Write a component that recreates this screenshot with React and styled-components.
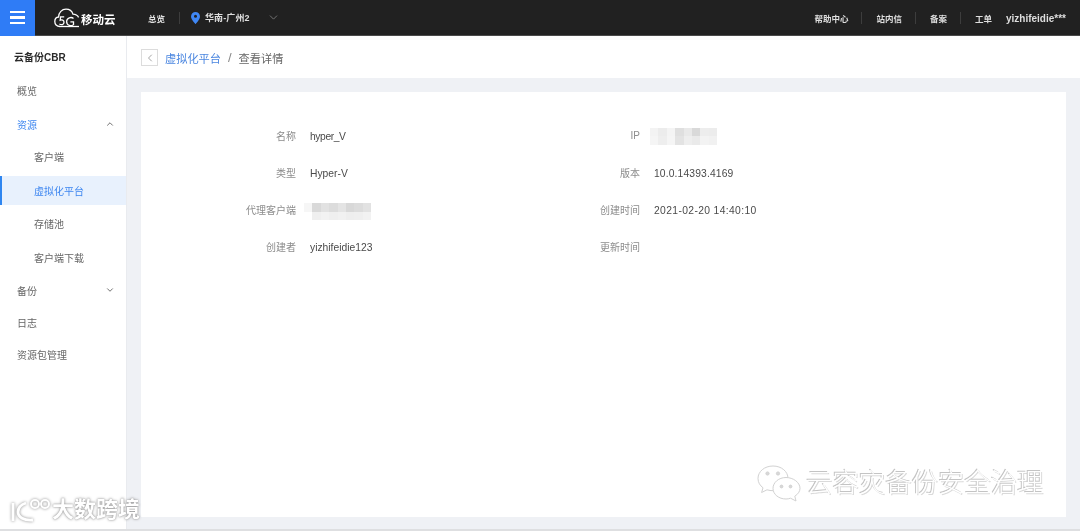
import React from 'react';
import styled, { createGlobalStyle } from 'styled-components';
import { ChevronDown, ChevronLeft, ChevronUp } from 'lucide-react';

const FONT = `"Liberation Sans", "Noto Sans CJK SC", sans-serif`;

const GlobalStyle = createGlobalStyle`
  html, body {
    margin: 0;
    padding: 0;
    background: #fff;
    font-family: ${FONT};
  }
`;

const Page = styled.div`
  position: relative;
  display: flex;
  flex-direction: column;
  width: 1080px;
  height: 531px;
  overflow: hidden;
  border-bottom: 2px solid #dedfe1;
  box-sizing: border-box;
  filter: blur(0.45px);
`;

/* top bar */
const TopBar = styled.header`
  display: flex;
  align-items: center;
  flex: none;
  height: 36px;
  box-sizing: border-box;
  background: #212121;
  border-bottom: 1px solid #4a4a4a;
  color: #dedede;
  font-size: 8.5px;
  font-weight: 700;
`;

const MenuButton = styled.div`
  display: flex;
  flex-direction: column;
  justify-content: center;
  gap: 3px;
  width: 35px;
  height: 36px;
  padding: 0 10px;
  box-sizing: border-box;
  background: #2f7cf6;
  span {
    height: 2.5px;
    background: #fff;
  }
`;

const LogoWrap = styled.div`
  display: flex;
  align-items: flex-end;
  width: 62px;
  height: 20px;
  margin-left: 19px;
`;

const LogoText = styled.span`
  margin-left: 1px;
  color: #fff;
  font-size: 11.5px;
  line-height: 15px;
  font-weight: 700;
  white-space: nowrap;
`;

const NavText = styled.span`
  white-space: nowrap;
`;

const RegionName = styled.span`
  font-size: 9px;
  letter-spacing: 0.1px;
  white-space: nowrap;
`;

const BarDivider = styled.i`
  display: block;
  width: 1px;
  height: 12px;
  background: #3d3d3d;
`;

const RegionGroup = styled.div`
  display: flex;
  align-items: center;
  margin-left: 32px;
  ${BarDivider} { margin: 0 11px 0 14px; }
  svg.pin { margin-right: 5px; }
  svg.arrow { margin-left: 17px; color: #8b8b8b; }
`;

const TopRight = styled.nav`
  display: flex;
  align-items: center;
  margin-left: auto;
  padding-right: 14px;
`;

const TopLink = styled.div`
  display: flex;
  align-items: center;
  ${BarDivider} { margin: 0 14px 0 13px; }
`;

const UserName = styled.span`
  margin-left: 14px;
  padding-top: 1px;
  font-size: 10px;
  white-space: nowrap;
`;

/* body */
const Body = styled.div`
  display: flex;
  flex: 1;
  min-height: 0;
`;

const Sidebar = styled.aside`
  display: flex;
  flex-direction: column;
  flex: none;
  width: 127px;
  box-sizing: border-box;
  padding-top: 5px;
  background: #fff;
  border-right: 1px solid #e9ebef;
`;

const SideTitle = styled.div`
  height: 33px;
  padding-left: 14px;
  color: #2b2b2b;
  font-size: 10px;
  font-weight: 700;
  line-height: 34px;
`;

const SideGroup = styled.div`
  display: flex;
  flex-direction: column;
  margin-top: 2px;
`;

const SideItem = styled.div`
  position: relative;
  display: flex;
  align-items: center;
  justify-content: space-between;
  flex: none;
  height: ${p => (p.$sub ? '29px' : '32px')};
  margin: ${p => (p.$sub ? '2.25px 0' : '0')};
  padding: 0 11px 0 ${p => (p.$sub ? '34px' : '17px')};
  color: ${p => (p.$active ? '#3d86f0' : '#666')};
  background: ${p => (p.$selected ? '#e8f1fd' : 'transparent')};
  font-size: 10px;
  white-space: nowrap;
  svg { color: #555; }
  ${p => p.$selected && `
    &::before {
      content: '';
      position: absolute;
      left: 0;
      top: 0;
      bottom: 0;
      width: 2px;
      background: #2f86f0;
    }
  `}
`;

const Main = styled.main`
  display: flex;
  flex-direction: column;
  flex: 1;
  min-width: 0;
  background: #eff1f5;
`;

const Breadcrumb = styled.div`
  display: flex;
  align-items: center;
  flex: none;
  height: 42px;
  padding: 1px 0 0 14px;
  box-sizing: border-box;
  background: #fff;
  font-size: 11.2px;
  color: #666;
`;

const BackButton = styled.div`
  display: flex;
  align-items: center;
  justify-content: center;
  width: 17px;
  height: 17px;
  margin-right: 7px;
  box-sizing: border-box;
  border: 1px solid #dcdcdc;
  color: #666;
`;

const CrumbLink = styled.span`
  color: #4a86e0;
`;

const CrumbSlash = styled.span`
  margin: 0 7px;
  color: #888;
  font-size: 13px;
`;

const Card = styled.section`
  flex: 1;
  margin: 14px 14px 12px;
  padding-top: 25px;
  background: #fff;
`;

const DetailGrid = styled.div`
  display: grid;
  grid-template-columns: 344px 344px;
  grid-auto-rows: 37px;
`;

const Field = styled.div`
  display: flex;
  align-items: center;
  font-size: 10px;
`;

const FieldLabel = styled.span`
  width: 155px;
  text-align: right;
  color: #8c8c8c;
  white-space: nowrap;
`;

const FieldValue = styled.span`
  margin-left: 14px;
  padding-top: 1px;
  color: #4a4a4a;
  font-size: 10.3px;
  letter-spacing: ${p => p.$spread || 0}px;
  white-space: nowrap;
`;

const Mosaic = styled.div`
  display: grid;
  grid-template-columns: repeat(8, 8.4px);
  grid-auto-rows: 8.5px;
  margin-left: ${p => p.$left}px;
  margin-top: ${p => p.$top}px;
`;

const MosaicCell = styled.i`
  display: block;
  background: ${p => p.$shade};
`;

/* watermarks lying over the page */
const WatermarkRight = styled.div`
  position: absolute;
  left: 757px;
  top: 463px;
  display: flex;
  align-items: center;
  gap: 5px;
  color: #fff;
  font-size: 26.4px;
  font-weight: 300;
  line-height: 40px;
  white-space: nowrap;
  text-shadow: -1px -1px 0 #c4c4c4, 1px 1px 0 #dadada;
`;

const WatermarkLeft = styled.div`
  position: absolute;
  left: 9px;
  top: 495px;
  display: flex;
  align-items: center;
  gap: 1px;
  color: #fff;
  font-size: 22px;
  font-weight: 700;
  line-height: 30px;
  white-space: nowrap;
  text-shadow: 0 0 3px #8f8f8f, 0 0 1px #9a9a9a;
`;

const ipShades = [
  '#f3f3f3', '#ececec', '#f4f4f4', '#dfdfdf', '#e9e9e9', '#d9d9d9', '#ededed', '#ececec',
  '#f5f5f5', '#eeeeee', '#f5f5f5', '#e3e3e3', '#eeeeee', '#eaeaea', '#f3f3f3', '#f1f1f1',
];

const clientShades = [
  '#f6f6f6', '#d9d9d9', '#e2e2e2', '#dcdcdc', '#e4e4e4', '#d8d8d8', '#dcdcdc', '#e2e2e2',
  '#ffffff', '#efefef', '#f2f2f2', '#efefef', '#f1f1f1', '#eeeeee', '#efefef', '#f2f2f2',
];

const rows = [
  [
    { label: '名称', value: 'hyper_V', spread: -0.4 },
    { label: 'IP', shades: ipShades, left: 10, top: 1 },
  ],
  [
    { label: '类型', value: 'Hyper-V' },
    { label: '版本', value: '10.0.14393.4169', spread: 0.14 },
  ],
  [
    { label: '代理客户端', shades: clientShades, left: 8, top: 4 },
    { label: '创建时间', value: '2021-02-20 14:40:10', spread: 0.37 },
  ],
  [
    { label: '创建者', value: 'yizhifeidie123' },
    { label: '更新时间', value: '' },
  ],
];

const Logo = () => (
  <LogoWrap>
    <svg width="26" height="20" viewBox="0 0 26 20" fill="none" stroke="#fff" strokeWidth="1.3">
      <path d="M6 18.5 C2.5 18.5 .8 16 .8 13.5 C.8 11 2.5 9.2 4.6 9 C4.6 4.5 8 1.2 12 1.2 C15.5 1.2 18 3.2 19 6.2 C21.5 6.2 23.5 7.4 24.6 9.4" />
      <path d="M10.2 8.8 H6.6 L6.2 12.2 C7.8 11.4 10 12 10 14.2 C10 16.6 7.4 17.4 5.4 16" />
      <path d="M19.5 10.5 C17.5 8.6 12.6 9.4 12.6 13.6 C12.6 17.8 17.4 18.6 19.5 16.6 V13.8 H16.4" />
      <path d="M6 18.5 H25" />
    </svg>
    <LogoText>移动云</LogoText>
  </LogoWrap>
);

const Pin = () => (
  <svg className="pin" width="9" height="12" viewBox="0 0 9 12">
    <path d="M4.5 0 C2 0 0 2 0 4.4 C0 7.4 4.5 12 4.5 12 S9 7.4 9 4.4 C9 2 7 0 4.5 0 Z" fill="#3f87f5" />
    <circle cx="4.5" cy="4.3" r="1.5" fill="#212121" />
  </svg>
);

const WechatMark = () => (
  <svg width="44" height="37" viewBox="0 0 44 37" fill="#fff" stroke="#d2d2d2" strokeWidth="1">
    <path d="M16 1 C7.5 1 1 6.5 1 13.5 C1 17.5 3 20.5 6 22.8 L4.6 27.5 L10 24.8 C12 25.4 14 25.7 16 25.7 C24.5 25.7 31 20 31 13.5 C31 6.5 24.5 1 16 1 Z" />
    <path d="M29 12.5 C21.8 12.5 16 17.4 16 23.4 C16 29.4 21.8 34 29 34 C30.6 34 32 33.8 33.5 33.2 L39 36 L37.8 31.2 C40.8 29.2 43 26.6 43 23.4 C43 17.4 36.2 12.5 29 12.5 Z" />
    <circle cx="10.5" cy="8.5" r="1.6" fill="#d8d8d8" />
    <circle cx="21" cy="8.5" r="1.6" fill="#d8d8d8" />
    <circle cx="24.5" cy="21.5" r="1.4" fill="#d8d8d8" />
    <circle cx="33.5" cy="21.5" r="1.4" fill="#d8d8d8" />
  </svg>
);

const KooMark = () => (
  <svg width="42" height="28" viewBox="0 0 42 28" fill="none" stroke="#fff" strokeWidth="2.8" style={{ filter: 'drop-shadow(0 0 1.5px #8a8a8a)' }}>
    <path d="M4 7 V25" />
    <path d="M17 7 C11 9 9 13 9 16 C9 21 15 25 24 24" />
    <circle cx="26" cy="8" r="4" strokeWidth="2" />
    <circle cx="36" cy="8" r="4" strokeWidth="2" />
  </svg>
);

const DetailField = ({ label, value, spread, shades, left, top }) => (
  <Field>
    <FieldLabel>{label}</FieldLabel>
    {shades
      ? (
        <Mosaic $left={left} $top={top}>
          {shades.map((shade, i) => <MosaicCell key={i} $shade={shade} />)}
        </Mosaic>
      )
      : <FieldValue $spread={spread}>{value}</FieldValue>}
  </Field>
);

export default function App() {
  return (
    <Page>
      <GlobalStyle />
      <TopBar>
        <MenuButton><span /><span /><span /></MenuButton>
        <Logo />
        <RegionGroup>
          <NavText>总览</NavText>
          <BarDivider />
          <Pin />
          <RegionName>华南-广州2</RegionName>
          <ChevronDown className="arrow" size={13} strokeWidth={1.4} />
        </RegionGroup>
        <TopRight>
          <TopLink><NavText>帮助中心</NavText><BarDivider /></TopLink>
          <TopLink><NavText>站内信</NavText><BarDivider /></TopLink>
          <TopLink><NavText>备案</NavText><BarDivider /></TopLink>
          <NavText>工单</NavText>
          <UserName>yizhifeidie***</UserName>
        </TopRight>
      </TopBar>
      <Body>
        <Sidebar>
          <SideTitle>云备份CBR</SideTitle>
          <SideItem>概览</SideItem>
          <SideGroup>
            <SideItem $active>资源<ChevronUp size={10} strokeWidth={2} /></SideItem>
            <SideItem $sub>客户端</SideItem>
            <SideItem $sub $active $selected>虚拟化平台</SideItem>
            <SideItem $sub>存储池</SideItem>
            <SideItem $sub>客户端下载</SideItem>
          </SideGroup>
          <SideItem>备份<ChevronDown size={10} strokeWidth={2} /></SideItem>
          <SideItem>日志</SideItem>
          <SideItem>资源包管理</SideItem>
        </Sidebar>
        <Main>
          <Breadcrumb>
            <BackButton><ChevronLeft size={12} strokeWidth={1.2} /></BackButton>
            <CrumbLink>虚拟化平台</CrumbLink>
            <CrumbSlash>/</CrumbSlash>
            <span>查看详情</span>
          </Breadcrumb>
          <Card>
            <DetailGrid>
              {rows.map(([leftField, rightField]) => (
                <React.Fragment key={leftField.label}>
                  <DetailField {...leftField} />
                  <DetailField {...rightField} />
                </React.Fragment>
              ))}
            </DetailGrid>
          </Card>
        </Main>
      </Body>
      <WatermarkRight><WechatMark />云容灾备份安全治理</WatermarkRight>
      <WatermarkLeft><KooMark />大数跨境</WatermarkLeft>
    </Page>
  );
}
